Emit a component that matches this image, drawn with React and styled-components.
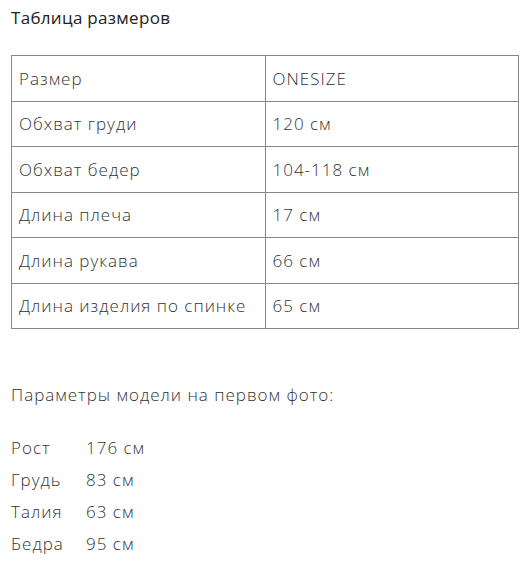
import React from 'react';
import styled, { createGlobalStyle } from 'styled-components';

const sizes = [
  ['Размер', 'ONESIZE'],
  ['Обхват груди', '120 см'],
  ['Обхват бедер', '104-118 см'],
  ['Длина плеча', '17 см'],
  ['Длина рукава', '66 см'],
  ['Длина изделия по спинке', '65 см'],
];

const model = [
  ['Рост', '176 см'],
  ['Грудь', '83 см'],
  ['Талия', '63 см'],
  ['Бедра', '95 см'],
];

const GlobalStyle = createGlobalStyle`
  body {
    margin: 0;
    background: #fff;
    font-family: "Open Sans", "Noto Sans", sans-serif;
    font-weight: 300;
    color: #333;
    letter-spacing: 1px;
  }
`;

const Page = styled.div`
  padding: 6px 14px 0 11px;
`;

const Title = styled.div`
  font-size: 17px;
  line-height: 24px;
  font-weight: 400;
  letter-spacing: 0.3px;
  color: #222;
`;

const SizeTable = styled.table`
  margin-top: 25px;
  width: 508px;
  border-collapse: collapse;
  font-size: 17px;
`;

const Cell = styled.td`
  width: 50%;
  height: 44.5px;
  padding: 0 7px;
  border: 1px solid #888;
  vertical-align: middle;
`;

const Note = styled.p`
  margin: 54px 0 0;
  font-size: 17px;
  line-height: 24px;
`;

const Params = styled.div`
  margin-top: 29px;
  display: grid;
  grid-template-columns: 75px auto;
  row-gap: 8px;
  font-size: 17px;
  line-height: 24px;
`;

export default function App () {
  return (
    <Page>
      <GlobalStyle />
      <Title>Таблица размеров</Title>
      <SizeTable>
        <tbody>
          {sizes.map(([name, value]) => (
            <tr key={name}>
              <Cell>{name}</Cell>
              <Cell>{value}</Cell>
            </tr>
          ))}
        </tbody>
      </SizeTable>
      <Note>Параметры модели на первом фото:</Note>
      <Params>
        {model.map(([name, value]) => (
          <React.Fragment key={name}>
            <span>{name}</span>
            <span>{value}</span>
          </React.Fragment>
        ))}
      </Params>
    </Page>
  );
}
